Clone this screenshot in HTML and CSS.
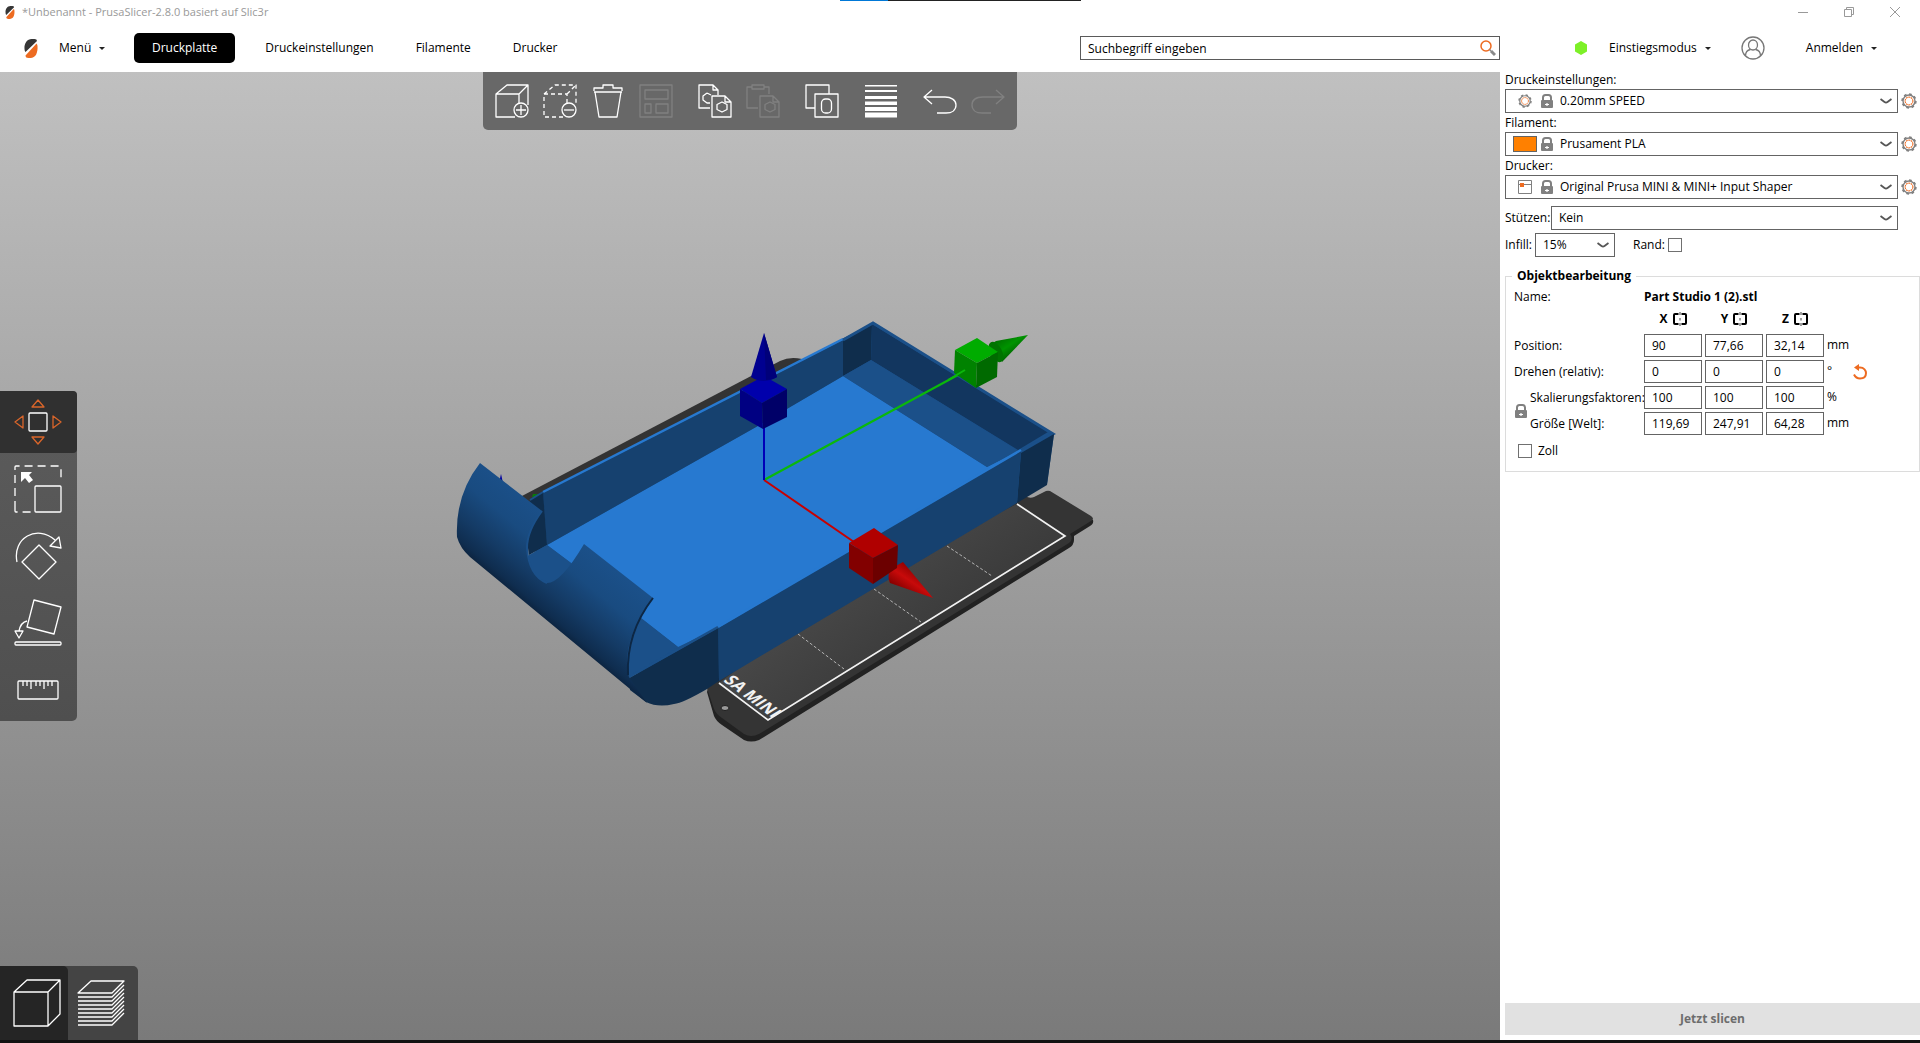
FILE: index.html
```html
<!DOCTYPE html>
<html lang="de">
<head>
<meta charset="utf-8">
<title>*Unbenannt - PrusaSlicer-2.8.0 basiert auf Slic3r</title>
<link rel="stylesheet" href="styles.css">
</head>
<body>
<svg class="defs" width="0" height="0" aria-hidden="true">
  <symbol id="logo" viewBox="0 0 13 19">
    <path d="M0 10C-.5 4 3 0 7 0h3q2.500 0 2.500 2L1 13q-1-1-1-3z" fill="#363636"/>
    <path d="M13 7c.5 7-2 12-7 12H4q-3 0-3-2.500L12 4.500q1 1 1 2.500z" fill="#ed6b21"/>
  </symbol>
  <symbol id="gear" viewBox="0 0 16 16">
    <circle cx="8" cy="8" r="6" fill="none" stroke="#808080" stroke-width="1.4"/>
    <circle cx="8" cy="8" r="6.9" fill="none" stroke="#808080" stroke-width="1.6" stroke-dasharray="2.7 2.7"/>
    <circle cx="8" cy="8" r="3.9" fill="none" stroke="#ed6b21" stroke-width="1.1" stroke-dasharray="1.8 .65"/>
  </symbol>
  <symbol id="lock" viewBox="0 0 12 14">
    <path d="M2 7V3.500C2 1.800 3.200 1 4.500 1h3C8.800 1 10 1.800 10 3.500V7" fill="none" stroke="#808080" stroke-width="2"/>
    <rect y="6" width="12" height="8" rx="1" fill="#808080"/>
    <path d="M4 10.500h4M6 9v3" stroke="#fff" stroke-width="1.200"/>
  </symbol>
  <symbol id="chev" viewBox="0 0 12 6"><path d="M.5 1L4.500 4q1.500 1 3 0l4-3" fill="none" stroke="#555" stroke-width="1.800"/></symbol>
  <symbol id="mirror" viewBox="0 0 14 14">
    <path d="M5.500 2H2Q1 2 1 3v8q0 1 1 1h3.500M8.500 2H12q1 0 1 1v8q0 1-1 1H8.500" fill="none" stroke="#000" stroke-width="2"/>
    <path d="M7 0v3M7 6v2.500M7 11v3" stroke="#808080" stroke-width="1.500"/>
  </symbol>
</svg>

<header class="titlebar">
  <svg class="title-logo"><use href="#logo"/></svg>
  <span class="title-text">*Unbenannt - PrusaSlicer-2.8.0 basiert auf Slic3r</span>
  <div class="window-buttons">
    <button aria-label="Minimieren"><svg width="10" height="10"><path d="M0 5.500h10"/></svg></button>
    <button aria-label="Verkleinern"><svg width="10" height="10"><path d="M.5 2.500h7v7h-7zM2.500 2.500v-2h7v7h-2"/></svg></button>
    <button aria-label="Schließen"><svg width="10" height="10"><path d="M0 0l10 10M10 0L0 10"/></svg></button>
  </div>
  <div class="dock-hint"></div>
</header>

<nav class="topbar">
  <svg class="menu-logo"><use href="#logo"/></svg>
  <button class="drop menu">Menü</button>
  <div class="tabs">
    <button class="tab active">Druckplatte</button>
    <button class="tab">Druckeinstellungen</button>
    <button class="tab">Filamente</button>
    <button class="tab">Drucker</button>
  </div>
  <div class="search">
    <input type="text" value="Suchbegriff eingeben" aria-label="Suche">
    <svg width="16" height="17" viewBox="0 0 16 17"><circle cx="6" cy="6" r="5" fill="none" stroke="#ed6b21" stroke-width="1.500"/><path d="M9.500 9.500l1.500 1.500" stroke="#888" stroke-width="1.500"/><path d="M11 11l4 4" stroke="#888" stroke-width="3"/></svg>
  </div>
  <div class="account">
    <svg width="12" height="14"><path d="M6 0l6 3.500v7L6 14l-6-3.500v-7z" fill="#7df028"/></svg>
    <button class="drop mode">Einstiegsmodus</button>
    <svg class="avatar" width="24" height="24" viewBox="0 0 24 24" fill="none" stroke="#777" stroke-width="1.300"><circle cx="12" cy="12" r="11"/><ellipse cx="12" cy="9" rx="4.500" ry="5"/><path d="M4.500 20c0-4 2-6 5-6.500M19.500 20c0-4-2-6-5-6.500"/></svg>
    <button class="drop">Anmelden</button>
  </div>
</nav>

<main class="workspace">
<section class="view">
  <svg class="scene" viewBox="0 72 1500 968" role="img" aria-label="3D-Ansicht">
    <defs>
      <linearGradient id="curl" gradientUnits="userSpaceOnUse" x1="584" y1="544" x2="531" y2="608">
        <stop offset="0" stop-color="#1b5089"/><stop offset=".35" stop-color="#194b80"/><stop offset=".7" stop-color="#143a64"/><stop offset=".92" stop-color="#0f2d4f"/><stop offset="1" stop-color="#0c2440"/>
      </linearGradient>
      <linearGradient id="redcone" gradientUnits="userSpaceOnUse" x1="918" y1="570" x2="903" y2="592">
        <stop offset="0" stop-color="#8c0000"/><stop offset=".5" stop-color="#c80a0a"/><stop offset="1" stop-color="#850000"/>
      </linearGradient>
      <linearGradient id="greencone" gradientUnits="userSpaceOnUse" x1="1004" y1="338" x2="1014" y2="353">
        <stop offset="0" stop-color="#007800"/><stop offset=".5" stop-color="#009400"/><stop offset="1" stop-color="#006a00"/>
      </linearGradient>
      <linearGradient id="bed" gradientUnits="userSpaceOnUse" x1="800" y1="620" x2="860" y2="700">
        <stop offset="0" stop-color="#474747"/><stop offset="1" stop-color="#3a3a3a"/>
      </linearGradient>
    </defs>
    <path d="M501 474l-4 18h8z" fill="#0000a0"/>
    <path d="M520 497L780 361q10-5 22-2l10 5-280 150z" fill="#333"/>
    <path d="M533 494h8l-3 3h-6z" fill="#0a7a0a"/>
    <path d="M707 692l7 24q2 5 8 9l22 15q7 3 15 0L1069 548q5-3 5-8v-4l16-10q4-2 3-6L980 500 719 650z" fill="#222"/>
    <path d="M707 688l7 21q2 5 8 9l22 16q7 4 15 0L1069 543q5-4 1-9l21-13q4-2 0-5l-41-25q-3-1-6 1l-10 5q-4 2-9-1L719 640z" fill="#343434"/>
    <path d="M719 683l49 37 297-184-48-32-180 90z" fill="url(#bed)"/>
    <path d="M719 683l49 37 297-184-48-32" fill="none" stroke="#f2f2f2" stroke-width="1.700"/>
    <path d="M798 634l46 35M874 589l47 33M947 546l45 30" stroke="#b4b4b4" stroke-width="1" stroke-dasharray="3 2"/>
    <ellipse cx="725" cy="708" rx="4" ry="2.500" fill="#999" stroke="#1e1e1e"/>
    <text class="bed-label" transform="translate(719 683) rotate(37) skewX(-21)" x="0" y="-4">SA MINI</text>

    <path d="M543 493L873 323l181 111-7 50-340 201-60-8-20-10-95-90z" fill="#1b5089"/>
    <path d="M547 545L756 427 843 376 987 467 1021 449 718 628 678 647 571 563z" fill="#2779d0"/>
    <path d="M543 493L843 340v36L756 427 547 545z" fill="#16416f"/>
    <path d="M543 492L843 339" stroke="#2779d0" stroke-width="2.500"/>
    <path d="M530 501l13-9 4 53-18 10-3-20z" fill="#0f2d4c"/>
    <path d="M843 341l29-17-1 36-28 16z" fill="#0f2d4c"/>
    <path d="M872 324l176 108-30 18-147-90z" fill="#12365f"/>
    <path d="M871 360l148 91-32 16-144-91z" fill="#1b5089"/>
    <path d="M843 340l30-17 180 111-33 18" fill="none" stroke="#1b5089" stroke-width="3"/>
    <path d="M1021 453l33-19-7 51-30 18z" fill="#0f2d4c"/>
    <path d="M718 628l303-177-4 52L719 681z" fill="#16416f"/>
    <path d="M718 627l303-177" stroke="#2779d0" stroke-width="2.500"/>
    <path d="M547 545l24 18-10 18-14 5-22-10 4-21z" fill="#1b5089"/>
    <path d="M642 619l36 28-49 31-6-18z" fill="#1b5089"/>
    <path d="M629 678l89-50 1 53-12 8q-24 14-33 15-16 4-28-2l-16-12z" fill="#0f2d4c"/>
    <path d="M629 677l89-50" stroke="#1b5089" stroke-width="2.500"/>
    <path d="M530 500l13-8" stroke="#1b5089" stroke-width="2"/>
    <path d="M480 463l62 48q-15 20-15 37 2 28 20 35 14 0 37-39l69 54q-27 35-26 68l2 11 18 26L470 557q-10-9-13-20-2-42 23-74z" fill="url(#curl)"/>
    <path d="M542 511q-15 20-15 37 2 28 20 35" fill="none" stroke="#1b5089" stroke-width="2"/>
    <path d="M653 598q-27 35-25 77" fill="none" stroke="#0d2744" stroke-width="2"/>

    <path d="M764 480L969 369" stroke="#0bb80b" stroke-width="2.200"/>
    <path d="M764 480l90 62" stroke="#c80000" stroke-width="2"/>
    <path d="M764 480v-60" stroke="#0000b8" stroke-width="2"/>
    <path d="M740 389l24-13 23 13-25 14z" fill="#0000ac"/><path d="M740 389l22 14 1 26-23-13z" fill="#000082"/><path d="M762 403l25-14v28l-24 12z" fill="#000068"/>
    <path d="M764 333l-13 44q12 8 26 0z" fill="#000090"/><path d="M764 333l2 47q7 0 11-3z" fill="#00007a"/>
    <path d="M996 341l32-6-26 27-12-17z" fill="url(#greencone)"/><ellipse cx="996" cy="352" rx="6" ry="11" transform="rotate(-28 996 352)" fill="#007400"/>
    <path d="M955 350l22-12 21 14-21 11z" fill="#00ac00"/><path d="M955 350l22 13-1 25-22-15z" fill="#008200"/><path d="M977 363l21-11-1 25-21 11z" fill="#006a00"/><path d="M948 380l17-10" stroke="#0bb80b" stroke-width="2"/>
    <path d="M903 562l30 36-43-15q-4-8 2-15z" fill="url(#redcone)"/>
    <path d="M849 543l25-15 24 17-25 13z" fill="#b00000"/><path d="M849 543l24 15v26l-24-16z" fill="#820000"/><path d="M873 558l25-13-1 23-24 16z" fill="#6c0000"/>
  </svg>

  <div class="toolbar">
    <div class="group">
      <button aria-label="Hinzufügen"><svg viewBox="0 0 34 34"><path d="M20 33H1V10h23v10M1 10L12 1h21v20M24 10l9-9"/><circle cx="26" cy="26" r="7"/><path d="M26 21v10M21 26h10"/></svg></button>
      <button aria-label="Löschen"><svg viewBox="0 0 34 34"><path stroke-dasharray="4 3" d="M20 33H1V10h23v9M1 10L12 1h21v20M24 10l9-9"/><circle cx="26" cy="26" r="7"/><path d="M21 26h10"/></svg></button>
      <button aria-label="Alles löschen"><svg viewBox="0 0 34 34"><path d="M3 8h28M4 8l4 25h18l4-25M3 7V4h9V1h10v3h9v3"/></svg></button>
      <button aria-label="Anordnen" disabled><svg viewBox="0 0 34 34"><path d="M1 1h32v32H1zM6 6h23v9H6zM6 20h6v9H6zM17 20h12v9H17z"/></svg></button>
    </div>
    <div class="group">
      <button aria-label="Kopieren"><svg viewBox="0 0 34 34"><path d="M12 24H1V1h14l5 5v5M15 1v5h5M14 28V12h13l6 6v15H14zM27 12v6h6M9 9l-4 3v4l4 3h3M9 9l4 2"/><path d="M24 18l5 2.500v5L24 28l-5-2.500v-5z"/></svg></button>
      <button aria-label="Einfügen" disabled><svg viewBox="0 0 34 34"><path d="M12 24H1V3h5M18 3h5v7M6 1h12v4H6zM14 28V12h13l6 6v15H14zM27 12v6h6"/><path d="M24 18l5 2.500v5L24 28l-5-2.500v-5z"/></svg></button>
    </div>
    <div class="group">
      <button aria-label="Instanzen"><svg viewBox="0 0 34 34"><path d="M10 24H1V1h23v9M10 10h23v23H10z"/><rect x="16.500" y="15" width="10" height="14" rx="4"/></svg></button>
    </div>
    <div class="group">
      <button aria-label="Variable Schichthöhe"><svg viewBox="0 0 34 34" class="solid"><path d="M1 1h32v1.500H1zM1 6h32v2H1zM1 12h32v3H1zM1 17.500h32v3.500H1zM1 23h32v4H1zM1 28.500h32v5H1z"/></svg></button>
    </div>
    <div class="group">
      <button aria-label="Rückgängig"><svg viewBox="0 0 34 34"><path d="M9 6L1 13l8 7M1 13h21c6 0 11 3 11 8s-4 8-10 8h-9"/></svg></button>
      <button aria-label="Wiederholen" disabled><svg viewBox="0 0 34 34"><path d="M25 6l8 7-8 7M33 13H12C5 13 1 16 1 21s4 8 10 8h9"/></svg></button>
    </div>
  </div>

  <div class="gizmos">
    <button class="active" aria-label="Bewegen"><svg viewBox="0 0 48 48"><rect x="15" y="15" width="18" height="18" rx="1"/><path class="accent" d="M24 2l6 7H18zM24 46l6-7H18zM1 24l8-6v12zM47 24l-8-6v12z"/></svg></button>
    <button aria-label="Skalieren"><svg viewBox="0 0 48 48"><rect x="21" y="21" width="26" height="26" rx="1"/><path stroke-dasharray="8 5" d="M1 44V2q0-1 1-1h44q1 0 1 1v14M1 41v5q0 1 1 1h16"/><path class="fill" d="M7 7h11l-3 3 4 5-4 3-4-5-4 4z"/></svg></button>
    <button aria-label="Drehen"><svg viewBox="0 0 48 48"><path d="M25 13l17 17-17 17L8 30zM3 30C-2 6 23-8 41 8M36 14l9-9 2 11z"/></svg></button>
    <button aria-label="Auf Fläche legen"><svg viewBox="0 0 48 48"><path d="M20 1l27 7-7 27-27-7zM13 22c-5 1-7 5-8 10M1 32h8l-4 7z"/><rect x="1" y="43" width="46" height="3" rx="1"/></svg></button>
    <button aria-label="Messen"><svg viewBox="0 0 48 48"><rect x="4" y="15" width="40" height="18" rx="1"/><path d="M9 15v5M13 15v5M17 15v8M22 15v5M26 15v5M30 15v8M34 15v5M38 15v5"/></svg></button>
  </div>

  <div class="modes">
    <button class="active" aria-label="3D-Editor-Ansicht"><svg viewBox="0 0 48 48"><path d="M1 13h34v34H1zM1 13L14 1h33v34L35 47M35 13L47 1"/></svg></button>
    <button aria-label="Vorschau"><svg viewBox="0 0 48 48"><path d="M1 14L14 2h33L35 14zM1 18h34L47 6M1 22h34L47 10M1 26h34L47 14M1 30h34L47 18M1 34h34L47 22M1 38h34L47 26M1 42h34L47 30M1 46h34L47 34"/></svg></button>
  </div>
</section>

<aside class="sidebar">
  <div class="preset">
    <label for="print">Druckeinstellungen:</label>
    <div class="preset-row">
      <div class="combo"><span class="icons"><svg class="kind"><use href="#gear"/></svg><svg class="lock"><use href="#lock"/></svg></span><select id="print"><option>0.20mm SPEED</option></select><svg class="chev"><use href="#chev"/></svg></div>
      <button class="edit" aria-label="Bearbeiten"><svg><use href="#gear"/></svg></button>
    </div>
  </div>
  <div class="preset">
    <label for="filament">Filament:</label>
    <div class="preset-row">
      <div class="combo"><span class="icons"><span class="swatch"></span><svg class="lock"><use href="#lock"/></svg></span><select id="filament"><option>Prusament PLA</option></select><svg class="chev"><use href="#chev"/></svg></div>
      <button class="edit" aria-label="Bearbeiten"><svg><use href="#gear"/></svg></button>
    </div>
  </div>
  <div class="preset">
    <label for="printer">Drucker:</label>
    <div class="preset-row">
      <div class="combo"><span class="icons"><svg class="kind" viewBox="0 0 14 14"><path d="M.5.5h13v13H.5zM.5 4.500h13" fill="none" stroke="#808080"/><path d="M2 3h4v4H2z" fill="#ed6b21"/></svg><svg class="lock"><use href="#lock"/></svg></span><select id="printer"><option>Original Prusa MINI &amp; MINI+ Input Shaper</option></select><svg class="chev"><use href="#chev"/></svg></div>
      <button class="edit" aria-label="Bearbeiten"><svg><use href="#gear"/></svg></button>
    </div>
  </div>
  <div class="quick">
    <label for="supports">Stützen:</label>
    <div class="combo plain"><select id="supports"><option>Kein</option></select><svg class="chev"><use href="#chev"/></svg></div>
  </div>
  <div class="quick infill">
    <label for="infill">Infill:</label>
    <div class="combo plain small"><select id="infill"><option>15%</option></select><svg class="chev"><use href="#chev"/></svg></div>
    <label for="brim" class="brim">Rand:</label>
    <input type="checkbox" id="brim">
  </div>

  <fieldset class="object">
    <legend>Objektbearbeitung</legend>
    <div class="row name"><span class="label">Name:</span><b>Part Studio 1 (2).stl</b></div>
    <div class="row axes"><span class="label"></span><b>X <svg><use href="#mirror"/></svg></b><b>Y <svg><use href="#mirror"/></svg></b><b>Z <svg><use href="#mirror"/></svg></b></div>
    <div class="row"><label class="label" for="px">Position:</label><input id="px" value="90"><input aria-label="Position Y" value="77,66"><input aria-label="Position Z" value="32,14"><span>mm</span></div>
    <div class="row"><label class="label" for="rx">Drehen (relativ):</label><input id="rx" value="0"><input aria-label="Drehen Y" value="0"><input aria-label="Drehen Z" value="0"><span class="unit">°</span><button class="reset" aria-label="Zurücksetzen"><svg width="14" height="16" viewBox="0 0 14 16"><path d="M4 3.500h3c4 0 6 3 6 5.500 0 3-2 5.500-6 5.500-3 0-5-2-6-4" fill="none" stroke="#ed6b21" stroke-width="2"/><path d="M1 3.500L6 0v7z" fill="#ed6b21"/></svg></button></div>
    <div class="scale">
      <svg class="lock"><use href="#lock"/></svg>
      <div class="row"><label class="label" for="sx">Skalierungsfaktoren:</label><input id="sx" value="100"><input aria-label="Skalierung Y" value="100"><input aria-label="Skalierung Z" value="100"><span>%</span></div>
      <div class="row"><label class="label" for="gx">Größe [Welt]:</label><input id="gx" value="119,69"><input aria-label="Größe Y" value="247,91"><input aria-label="Größe Z" value="64,28"><span>mm</span></div>
    </div>
    <label class="inch"><input type="checkbox">Zoll</label>
  </fieldset>
  <button class="slice" disabled>Jetzt slicen</button>
</aside>
</main>
<footer class="edge"></footer>
</body>
</html>
```

FILE: styles.css
```css
* { box-sizing: border-box; }
body {
  margin: 0;
  min-height: 100vh;
  display: flex;
  flex-direction: column;
  background: #fff;
  color: #000;
  font: 12px/16px "Open Sans", "Noto Sans", sans-serif;
}
button, input, select { font: inherit; color: inherit; }
button { border: 0; padding: 0; background: none; }
input, select { margin: 0; border: 1px solid #646464; border-radius: 0; background: #fff; }
svg { display: block; flex: none; }
.defs { position: absolute; }

.titlebar {
  position: relative;
  display: flex;
  align-items: center;
  height: 24px;
  padding: 0 20px 0 4px;
  gap: 6px;
  color: #999;
  font-size: 11px;
}
.title-logo { width: 12px; height: 13px; }
.window-buttons { display: flex; gap: 36px; margin-left: auto; }
.window-buttons svg { fill: none; stroke: #999; }
.dock-hint {
  position: absolute;
  top: 0;
  left: 840px;
  width: 241px;
  height: 1px;
  background: linear-gradient(90deg, #0078d7 48px, #222 48px);
}

.topbar { display: flex; align-items: center; height: 48px; }
.menu-logo { width: 14px; height: 19px; margin: 0 21px 0 24px; }
.drop { display: flex; align-items: center; gap: 8px; }
.drop::after { content: ""; border: 3px solid transparent; border-top-color: #222; border-bottom: 0; }
.menu { width: 75px; }
.tabs { display: flex; gap: 18px; }
.tab { height: 30px; padding: 0 12px; border-radius: 5px; }
.tab.active { padding: 0 18px; background: #000; color: #fff; }
.search { position: relative; width: 420px; margin-left: auto; }
.search input { display: block; width: 100%; height: 24px; padding: 0 24px 0 7px; border-color: #5a5a5a; }
.search svg { position: absolute; right: 4px; top: 4px; }
.account { display: flex; align-items: center; width: 420px; padding-left: 75px; }
.mode { margin: 0 30px 0 22px; }
.avatar { margin-right: 41px; }

.workspace { flex: 1; display: flex; }
.view {
  position: relative;
  flex: 1;
  display: flex;
  min-width: 0;
  background: linear-gradient(#c0c0c0, #7a7a7a);
}
.scene { flex: 1; width: 100%; min-width: 0; }
.bed-label { font-size: 16px; font-weight: 700; fill: #f2f2f2; }

.view button svg { fill: none; stroke: #fff; stroke-width: 1.300; stroke-linejoin: round; }
.view button:disabled svg { stroke: #808080; }
.view button svg.solid, .view .fill { fill: #fff; stroke: none; }
.view button .accent { stroke: #d9652a; }
.toolbar {
  position: absolute;
  top: 0;
  left: 50%;
  transform: translateX(-50%);
  display: flex;
  gap: 25px;
  padding: 12px;
  background: #686868;
  border-radius: 0 0 5px 5px;
}
.group { display: flex; gap: 14px; }
.toolbar svg { width: 34px; height: 34px; }
.gizmos {
  position: absolute;
  left: 0;
  top: 319px;
  display: grid;
  gap: 5px;
  width: 77px;
  background: linear-gradient(#5c5c5c, #4f4f4f);
  border-radius: 0 5px 5px 0;
}
.gizmos button { display: grid; place-items: center; height: 62px; padding-right: 2px; border-radius: 0 4px 4px 0; }
.gizmos .active { background: #303030; }
.gizmos svg, .modes svg { width: 48px; height: 48px; }
.modes { position: absolute; left: 0; bottom: 0; display: flex; background: #444; border-radius: 0 5px 0 0; }
.modes button { width: 70px; height: 74px; display: grid; place-items: center; padding-right: 4px; }
.modes .active { width: 68px; background: #252525; border-radius: 0 5px 0 0; padding: 0 0 0 6px; }

.sidebar { width: 420px; padding: 0 0 5px 5px; display: flex; flex-direction: column; }
.preset label { display: block; height: 17px; }
.preset { height: 43px; }
.preset-row { display: flex; align-items: center; gap: 3px; }
.combo { position: relative; flex: 1; margin-right: 0; }
.combo select { display: block; width: 100%; height: 24px; padding: 0 24px 0 54px; appearance: none; }
.combo.plain select { padding-left: 7px; }
.chev { position: absolute; right: 6px; top: 9px; width: 12px; height: 6px; }
.icons { position: absolute; left: 7px; top: 0; width: 41px; height: 24px; display: flex; align-items: center; justify-content: flex-end; gap: 9px; pointer-events: none; }
.kind { width: 14px; height: 14px; }
.lock { width: 12px; height: 14px; }
.swatch { width: 24px; height: 16px; margin-right: -5px; background: #ff8000; border: 1px solid #646464; }
.edit { margin-right: 3px; }
.edit svg { width: 16px; height: 16px; }
.quick { display: flex; align-items: center; height: 24px; margin: 5px 22px 3px 0; }
.quick label { width: 46px; }
.quick.infill { margin-top: 0; }
.quick.infill label { width: 30px; }
.quick .small { flex: none; width: 80px; }
.quick.infill .brim { width: 35px; margin-left: 18px; }
input[type="checkbox"] { appearance: none; width: 14px; height: 14px; border: 1px solid #707070; }

.object { margin: 8px 0 0; padding: 2px 0 12px 8px; border: 1px solid #dcdcdc; min-width: 0; }
.object legend { margin-left: -2px; padding: 0 5px; font-weight: 700; }
.row { display: flex; gap: 3px; height: 26px; }
.row .label { width: 127px; line-height: 23px; white-space: nowrap; }
.row > span:not(.label) { line-height: 22px; }
.row input { width: 58px; height: 23px; padding: 0 7px; }
.row.name { height: 22px; }
.row.name .label, .row.name b { line-height: 22px; }
.row.axes { height: 26px; padding-bottom: 4px; }
.axes b { width: 58px; display: flex; align-items: center; justify-content: center; gap: 5px; }
.axes svg { width: 14px; height: 14px; }
.unit { width: 23px; }
.reset { height: 23px; }
.scale { position: relative; padding-left: 16px; }
.scale .label { width: 111px; }
.scale .lock { position: absolute; left: 1px; top: 18px; }
.inch { display: flex; align-items: center; gap: 6px; margin: 5px 0 0 4px; }
.slice { height: 32px; margin-top: auto; background: #e1e1e1; color: #6d6d6d; font-weight: 700; }
.edge { height: 3px; background: #111; }
```
